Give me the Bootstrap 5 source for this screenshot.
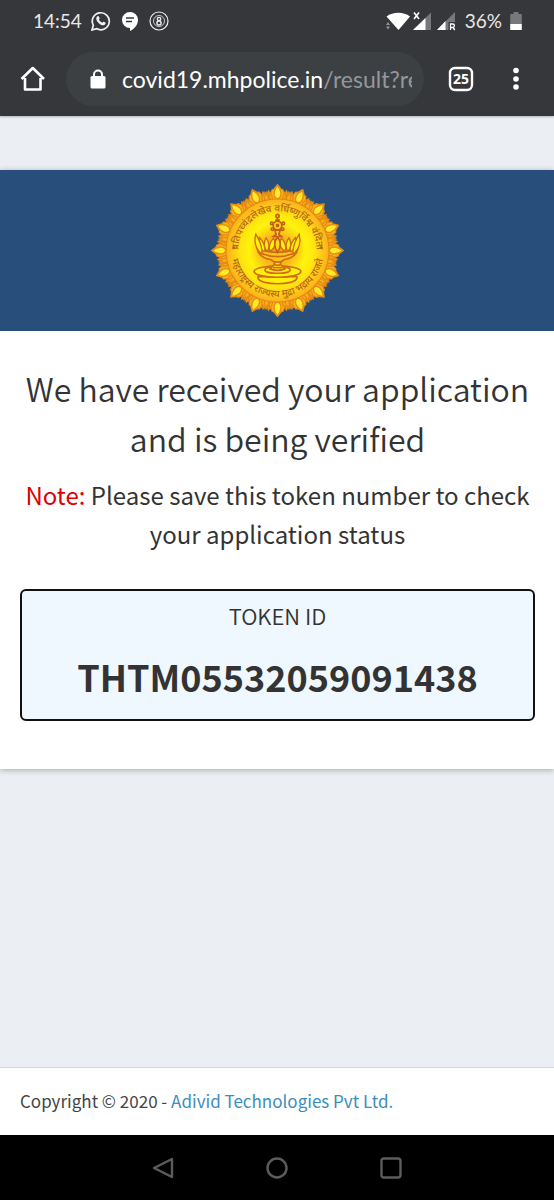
<!DOCTYPE html>
<html lang="en">
<head>
<meta charset="utf-8">
<meta name="viewport" content="width=device-width, initial-scale=1">
<title>Application received</title>
<link href="https://cdn.jsdelivr.net/npm/bootstrap@5.3.0/dist/css/bootstrap.min.css" rel="stylesheet">
<style>
  body { font-family: "Noto Sans CJK SC", sans-serif; color: #333; background: #ebeef3; }
  svg { display: block; flex: none; }
  .icon-btn { background: none; border: 0; padding: 0; color: #fff; }

  .phone-top { background: #36373b; color: #fff; font-family: Lato, "Noto Sans", sans-serif; box-shadow: 0 1px 2px rgba(0,0,0,.25); }
  .status-row { height: 42px; padding: 0 32px; font-size: 19px; line-height: 24px; color: #e8e8e9; }
  .status-left { gap: 9px; padding-left: 1px; }
  .tool-row { height: 74px; padding: 0 32px 0 20px; gap: 20px; }
  .url-pill { height: 54px; padding: 0 12px 0 24px; background: #3c4043; color: #fff; font-size: 23px; line-height: 32px; min-width: 0; }
  .url-text { overflow: hidden; white-space: nowrap; }
  .url-path { color: #94979b; }

  .result-card { margin-top: 54px; background: #fff; box-shadow: 0 1px 6px rgba(0,0,0,.3); }
  .banner { background: #284f7b; padding: 14px 0; }
  .result-body { padding: 32px 19px 48px 20px; }
  .headline { font-size: 32px; line-height: 50px; font-weight: 350; margin-bottom: 12px; }
  .note-line { font-size: 24px; line-height: 39px; margin-bottom: 36px; }
  .note-label { color: #e00000; }
  .token-box { background: #eff7ff; border: 2px solid #111; border-radius: 6px; }
  .token-label { font-size: 22px; line-height: 32px; font-weight: 350; margin-bottom: 18px; }
  .token-value { font-size: 36px; line-height: 54px; font-weight: 700; }

  .copyright { background: #fff; border-top: 1px solid #d2d6de; font-size: 17px; line-height: 27px; padding: 19px 20px 21px; color: #444; }
  .copyright a { color: #3c8dbc; text-decoration: none; }
  .nav-keys { background: #000; height: 65px; gap: 90px; }
</style>
</head>
<body>
<div class="d-flex flex-column min-vh-100">

  <header class="phone-top position-relative">
    <div class="status-row d-flex align-items-center justify-content-between">
      <div class="status-left d-flex align-items-center">
        <span>14:54</span>
        <svg width="20" height="20" viewBox="0 0 20 20"><path d="M1 19l1.300-4.700A8.500 8.500 0 1 1 5.500 17.600z" fill="none" stroke="#f1f1f1" stroke-width="1.700"/><path d="M6.500 5.300c.8-.7 1.300-.2 1.600.6l.5 1.300c.1.500-.4.900-.8 1.400.8 1.500 1.900 2.500 3.500 3.200.5-.5.8-1.100 1.300-1.100l1.800.9c.6.4-.1 2-1 2.500-3.300 1.300-8.600-3.700-8.100-6.900.1-.7.600-1.500 1.200-1.900z" fill="#f1f1f1"/></svg>
        <svg width="20" height="20" viewBox="0 0 20 20"><path d="M10 1a8 8 0 1 0 0 16v3c4-2 8-6 8-11a8 8 0 0 0-8-8z" fill="#fff"/><path d="M6 7h8M6 10.500h6" stroke="#36373b" stroke-width="1.500"/></svg>
        <svg width="20" height="20" viewBox="0 0 20 20" fill="none" stroke="#eee"><circle cx="10" cy="10" r="9" stroke-width="1.200"/><circle cx="10" cy="10" r="5.500" stroke-width=".8"/><ellipse cx="10" cy="8" rx="1.700" ry="1.600" stroke-width="1.400"/><ellipse cx="10" cy="12" rx="2.100" ry="2" stroke-width="1.400"/></svg>
      </div>
      <div class="d-flex align-items-center">
        <svg width="72" height="20" viewBox="0 0 72 20"><path d="M1.500 5.500C8 .5 18.500.5 25 5.500L13.500 19z" fill="#fff"/><path d="M1 14l2-3 2 3zM1 15.500l2 3 2-3z" fill="#929396"/><path d="M46 1.500V19H28z" fill="#77787b"/><path d="M40.500 7v12H28z" fill="#fff"/><path d="M29 1.500l5 6.500M34 1.500L29 8" stroke="#fff" stroke-width="1.600"/><path d="M70 1v18H52z" fill="#77787b"/><path d="M60.500 10v9H52z" fill="#fff"/><path d="M63.500 11h7.500v8.500h-7.500z" fill="#36373b"/><path d="M65.500 19v-6h2.200a1.600 1.600 0 0 1 0 3.500h-2M68 16.500l1.800 2.500" stroke="#fff" stroke-width="1.300" fill="none"/></svg>
        <span class="ms-2">36%</span>
        <svg class="ms-2" width="12" height="20" viewBox="0 0 12 20"><path d="M3.500 1h5v2H11a.8.8 0 0 1 .8.800V13H.2V3.800A.8.800 0 0 1 1 3h2.500z" fill="#77787b"/><path d="M.2 13h11.600v6H.2z" fill="#fff"/></svg>
      </div>
    </div>
    <div class="tool-row d-flex align-items-center">
      <button class="icon-btn" type="button" aria-label="Home">
        <svg width="26" height="26" viewBox="0 0 26 26"><path d="M1.500 13L12.800 2 24 13M5 12v11.500h15.500V12" fill="none" stroke="#fff" stroke-width="2.600" stroke-linejoin="round"/></svg>
      </button>
      <button class="icon-btn url-pill rounded-pill d-flex align-items-center flex-grow-1 me-1" type="button" aria-label="Address">
        <svg width="16" height="20" viewBox="0 0 16 20"><path d="M4 9V5.500a4 4 0 0 1 8 0V9" fill="none" stroke="#fff" stroke-width="2"/><rect x=".5" y="7" width="15" height="12.500" rx="1.500" fill="#fff"/></svg>
        <span class="url-text flex-grow-1 text-start ms-3">covid19.mhpolice.in<span class="url-path">/result?re</span></span>
      </button>
      <button class="icon-btn me-3" type="button" aria-label="25 open tabs">
        <svg width="26" height="26" viewBox="0 0 26 26"><rect x="2" y="2" width="22" height="22" rx="5" fill="none" stroke="#fff" stroke-width="2.400"/><text x="13" y="18" text-anchor="middle" font-family="Open Sans" font-size="14" font-weight="700" fill="#fff">25</text></svg>
      </button>
      <button class="icon-btn" type="button" aria-label="Menu">
        <svg width="12" height="26" viewBox="0 0 12 26" fill="#fff"><circle cx="6" cy="4.500" r="2.800"/><circle cx="6" cy="13" r="2.800"/><circle cx="6" cy="21" r="2.800"/></svg>
      </button>
    </div>
  </header>

  <main class="flex-grow-1">
    <section class="result-card">
      <div class="banner d-flex justify-content-center">
        <svg width="133" height="133" viewBox="-199 -199 398 398" role="img" aria-label="Seal of Maharashtra">
          <defs>
            <radialGradient id="disc"><stop offset="0" stop-color="#f39a1c"/><stop offset=".3" stop-color="#f9b91a"/><stop offset=".55" stop-color="#fff30c"/><stop offset=".72" stop-color="#ffe50f"/><stop offset="1" stop-color="#fbb01c"/></radialGradient>
            <g id="petal" stroke="#e58c14" stroke-width="4" fill="#ffe92a">
              <path d="M-40 -140L-37 -173L-31 -166L-27 -178L-21 -170L-16 -182L-10 -184L0 -197L10 -184L16 -182L21 -170L27 -178L31 -166L37 -173L40 -140z" fill="#f9b01a"/>
              <path d="M-20 -152Q-28 -160 -24 -172Q-14 -164 -15 -152zM20 -152Q28 -160 24 -172Q14 -164 15 -152zM-31 -148Q-38 -155 -35 -166M31 -148Q38 -155 35 -166" fill="none"/>
              <path d="M0 -154C-15 -160 -13 -180 0 -195C13 -180 15 -160 0 -154z"/>
            </g>
            <g id="flame" fill="#fff00c" stroke="#d06b1a" stroke-width="4">
              <path d="M18 0Q-1 -18 12 -37Q28 -19 24 0z"/>
              <path d="M29 0Q20 -18 34 -38Q47 -17 32 1z"/>
              <path d="M38 1Q36 -20 54 -39Q62 -15 42 3z"/>
              <path d="M46 4Q48 -22 65 -49Q74 -14 49 10z"/>
            </g>
            <path id="arcTop" d="M-117 0A117 117 0 0 1 117 0"/>
            <path id="arcBottom" d="M-139 0A139 139 0 0 0 139 0"/>
          </defs>
          <g id="quarter"><use href="#petal"/><use href="#petal" transform="rotate(22.500)"/><use href="#petal" transform="rotate(45)"/><use href="#petal" transform="rotate(67.500)"/></g>
          <use href="#quarter" transform="rotate(90)"/><use href="#quarter" transform="rotate(180)"/><use href="#quarter" transform="rotate(270)"/>
          <circle r="154" fill="url(#disc)" stroke="#e58612" stroke-width="3"/>
          <g font-family="Noto Sans Devanagari, Noto Sans, sans-serif" font-weight="500" fill="#b56616" text-anchor="middle">
            <text font-size="29"><textPath href="#arcTop" startOffset="50%">प्रतिपच्चंद्रलेखेव वर्धिष्णुर्विश्व वंदिता</textPath></text>
            <text font-size="29"><textPath href="#arcBottom" startOffset="50%">महाराष्ट्रस्य राज्यस्य मुद्रा भद्राय राजते</textPath></text>
          </g>
          <circle cx="-130" cy="-9" r="4" fill="#b56616"/><circle cx="130" cy="-9" r="4" fill="#b56616"/>
          <g fill="#fff00c" stroke="#d06b1a" stroke-width="5">
            <path d="M-58 78v5C-52 105 52 105 58 83V78z"/>
            <ellipse cy="63" rx="70" ry="17"/><ellipse cy="58" rx="38" ry="10"/>
            <path d="M-12 32L-8 40L-22 55Q0 64 22 55L8 40L12 32z"/>
            <path d="M-61 -6Q-57 21 -20 27Q-14 34 0 35Q14 34 20 27Q57 21 61 -6Q0 17 -61 -6z" fill="#fcc416"/>
            <path d="M-48 9Q0 28 48 9M-9 44H9M-14 51H14" fill="none"/>
          </g>
          <use href="#flame"/><use href="#flame" transform="scale(-1 1)"/>
          <g fill="#fdd914" stroke="#c45f18" stroke-width="5">
            <path d="M0 -40Q17 -20 0 5Q-17 -20 0 -40z"/>
            <path d="M-8 -61L-4 -48L-12 -42H12L4 -48L8 -61z"/>
            <circle cy="-75" r="13"/><circle cx="-17" cy="-81" r="4"/><circle cx="17" cy="-81" r="4"/><circle cx="-15" cy="-64" r="4"/><circle cx="15" cy="-64" r="4"/>
            <path d="M0 -88V-98M-7 -91H7"/><circle cy="-103" r="5"/><circle cy="-75" r="3"/>
          </g>
        </svg>
      </div>
      <div class="result-body text-center">
        <h1 class="headline">We have received your application<br>and is being verified</h1>
        <p class="note-line"><span class="note-label">Note:</span> Please save this token number to check<br>your application status</p>
        <div class="token-box pt-2 pb-3">
          <div class="token-label">TOKEN ID</div>
          <div class="token-value">THTM05532059091438</div>
        </div>
      </div>
    </section>
  </main>

  <footer>
    <div class="copyright">Copyright © 2020 - <a href="#">Adivid Technologies Pvt Ltd.</a></div>
    <nav class="nav-keys d-flex align-items-center justify-content-center" aria-label="System keys">
      <button class="icon-btn" type="button" aria-label="Back"><svg width="24" height="24" viewBox="0 0 24 24"><path d="M21 3v18L3 12z" fill="none" stroke="#5c5c5c" stroke-width="2.400" stroke-linejoin="round"/></svg></button>
      <button class="icon-btn" type="button" aria-label="Home screen"><svg width="24" height="24" viewBox="0 0 24 24"><circle cx="12" cy="12" r="9.500" fill="none" stroke="#5c5c5c" stroke-width="2.400"/></svg></button>
      <button class="icon-btn" type="button" aria-label="Recent apps"><svg width="24" height="24" viewBox="0 0 24 24"><rect x="2.500" y="2.500" width="19" height="19" rx="2.500" fill="none" stroke="#5c5c5c" stroke-width="2.400"/></svg></button>
    </nav>
  </footer>
</div>
<script src="https://cdn.jsdelivr.net/npm/bootstrap@5.3.0/dist/js/bootstrap.bundle.min.js"></script>
</body>
</html>
